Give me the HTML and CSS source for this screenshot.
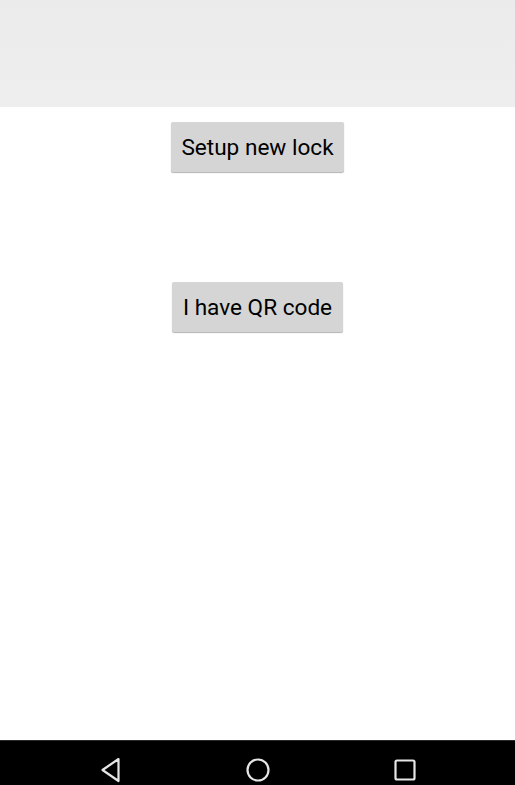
FILE: index.html
```html
<!DOCTYPE html>
<html>
<head>
<meta charset="utf-8">
<link rel="stylesheet" href="styles.css">
</head>
<body>
<div class="screen">
  <header class="appbar"></header>
  <main class="content">
    <button class="btn btn-first">Setup new lock</button>
    <button class="btn btn-second">I have QR code</button>
  </main>
  <nav class="navbar">
    <span class="nav-slot">
      <svg class="nav-icon" width="24" height="26" viewBox="0 0 24 26">
        <path d="M19.5 2 L3.5 13 L19.5 24 Z" fill="none" stroke="#e6e6e6" stroke-width="2.2" stroke-linejoin="round"/>
      </svg>
    </span>
    <span class="nav-slot">
      <svg class="nav-icon" width="26" height="26" viewBox="0 0 26 26">
        <circle cx="13" cy="13" r="10.5" fill="none" stroke="#e6e6e6" stroke-width="2.2"/>
      </svg>
    </span>
    <span class="nav-slot">
      <svg class="nav-icon" width="24" height="24" viewBox="0 0 24 24">
        <rect x="2.5" y="2.5" width="19" height="19" rx="1.5" fill="none" stroke="#e6e6e6" stroke-width="2.2"/>
      </svg>
    </span>
  </nav>
</div>
</body>
</html>
```

FILE: styles.css
```css
* { box-sizing: border-box; }
html, body {
  margin: 0;
  padding: 0;
  background: #ffffff;
  font-family: Roboto, "Noto Sans", "Liberation Sans", sans-serif;
}
.screen {
  width: 515px;
  height: 785px;
  display: flex;
  flex-direction: column;
}
.appbar {
  height: 107px;
  background: linear-gradient(#ebebeb, #eeeeee);
  flex: none;
}
.content {
  flex: 1;
  display: flex;
  flex-direction: column;
  align-items: center;
  padding-top: 15px;
}
.btn {
  height: 50px;
  padding: 2px 10.5px 0;
  border: none;
  border-radius: 2px;
  background: #d5d5d5;
  color: #000000;
  font-family: Roboto, "Noto Sans", "Liberation Sans", sans-serif;
  font-size: 22.6px;
  line-height: 48px;
  box-shadow: 0 1px 1px rgba(0,0,0,0.3);
}
.btn-second {
  margin-top: 110px;
}
.navbar {
  height: 45px;
  flex: none;
  background: #000000;
  border-top: 1px solid #2a2a2a;
  display: flex;
  align-items: center;
  justify-content: center;
  gap: 99px;
}
.nav-slot {
  width: 48px;
  display: flex;
  justify-content: center;
  margin-top: 14px;
}
.nav-icon {
  display: block;
}
```
